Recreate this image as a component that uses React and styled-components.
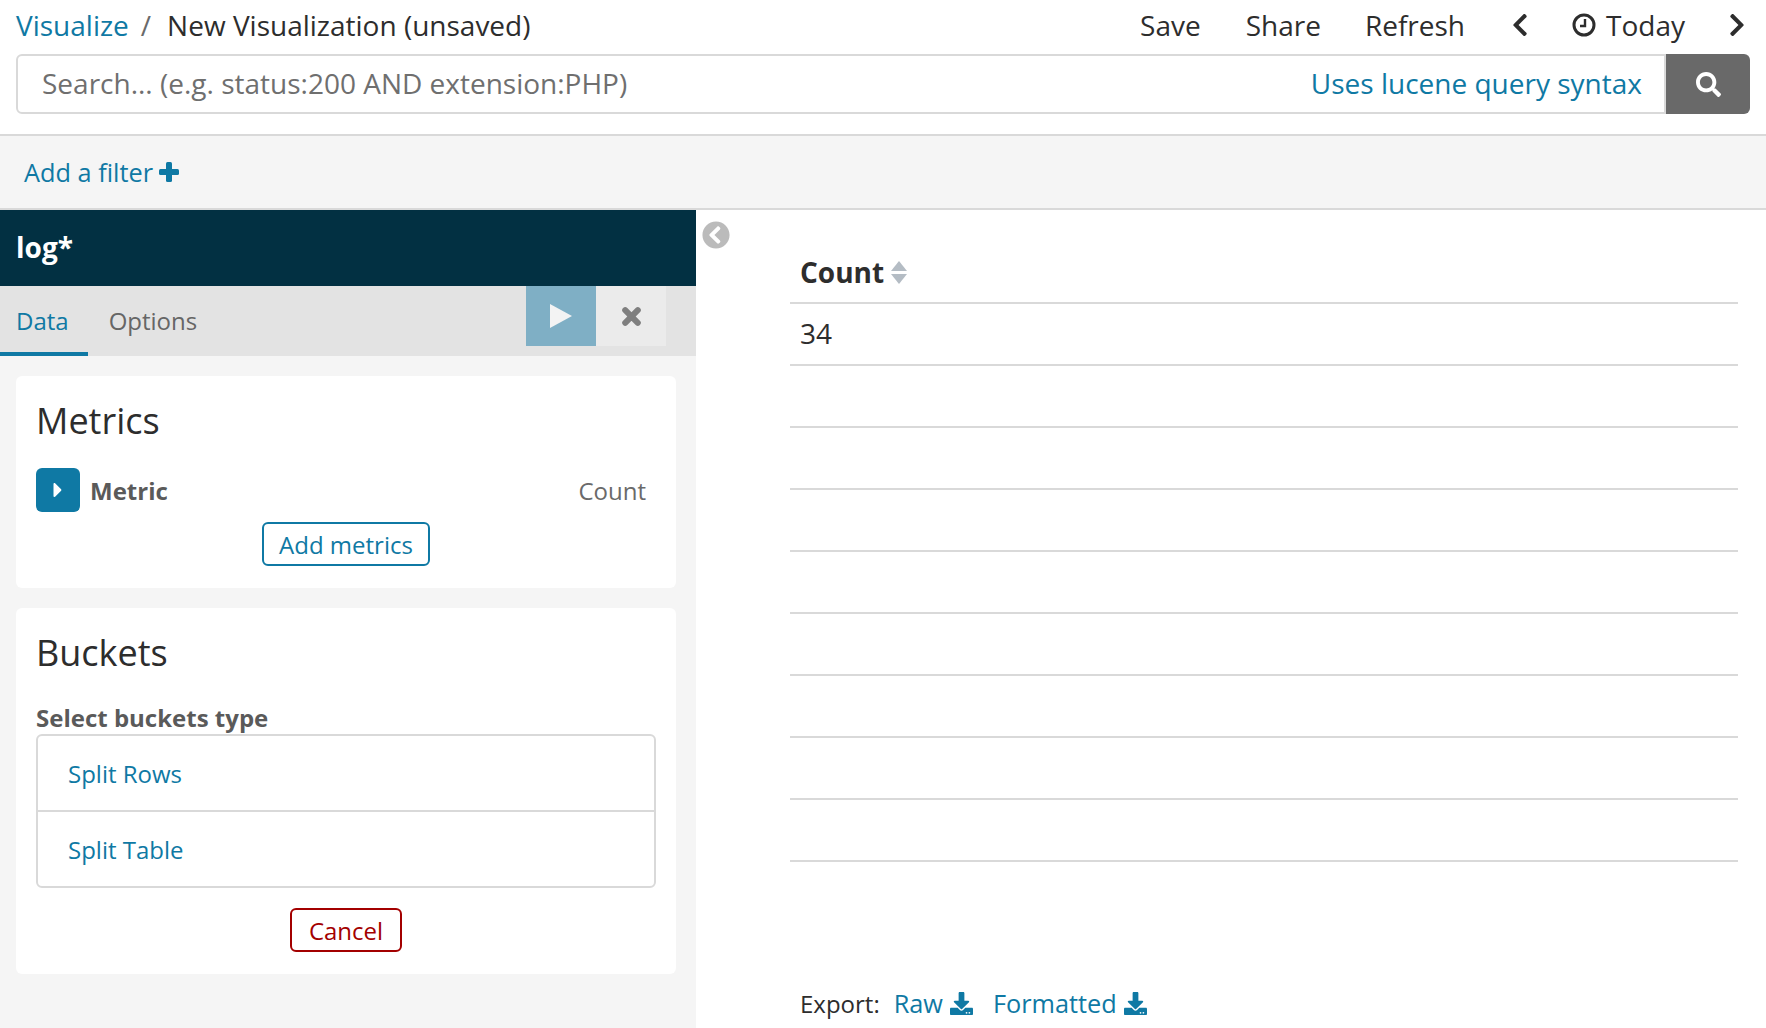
import React from "react";
import styled, { createGlobalStyle } from "styled-components";
import { FaChevronLeft, FaChevronRight, FaSearch, FaCaretRight, FaDownload, FaChevronCircleLeft } from "react-icons/fa";

const Global = createGlobalStyle`
  html, body { margin: 0; padding: 0; background: #fff; }
  body { font-family: "Open Sans", "Noto Sans", sans-serif; color: #2d2d2d; font-size: 24px; }
  * { box-sizing: border-box; }
`;

const Page = styled.div`
  height: 1028px; width: 1766px; overflow: hidden; display: flex; flex-direction: column;
`;
const Top = styled.header`
  height: 136px; border-bottom: 2px solid #d9d9d9; padding: 0 16px; flex: none;
`;
const NavRow = styled.div`
  height: 54px; padding: 0 0 4px 0; display: flex; align-items: center; justify-content: space-between; font-size: 28px;
`;
const Crumbs = styled.div`display: flex; align-items: center;`;
const Link = styled.a`color: #0f79a4; text-decoration: none;`;
const Sep = styled.span`color: #6a6a6a; margin: 0 16px 0 12px;`;
const NavMenu = styled.div`display: flex; align-items: center;`;
const NavItem = styled.span`
  margin-left: ${p => p.$gap || 45}px; display: inline-flex; align-items: center; gap: 10px; color: #2d2d2d;
  svg { display: block; }
`;
const SearchRow = styled.div`display: flex; height: 60px; width: 1734px;`;
const SearchBox = styled.div`
  flex: 1; border: 2px solid #d9d9d9; border-radius: 6px 0 0 6px;
  display: flex; align-items: center; justify-content: space-between; padding: 0 22px 2px 24px; font-size: 28px;
`;
const Placeholder = styled.span`color: #6f6f6f;`;
const SearchBtn = styled.div`
  width: 84px; background: #696969; color: #fff; border-radius: 0 6px 6px 0; display: flex; align-items: center; justify-content: center;
`;
const FilterBar = styled.div`
  height: 74px; background: #f5f5f5; border-bottom: 2px solid #d9d9d9; padding: 0 24px; display: flex; align-items: center; flex: none; font-size: 25.3px;
`;
const AddFilter = styled(Link)`display: inline-flex; align-items: center; gap: 6px;`;
const Body = styled.div`flex: 1; display: flex; min-height: 0; position: relative;`;
const Side = styled.aside`width: 696px; background: #f5f5f5; flex: none; display: flex; flex-direction: column;`;
const SideHead = styled.div`
  height: 76px; background: #023042; color: #fff; font-weight: 700; font-size: 28px; display: flex; align-items: center; padding: 0 0 2px 16px;
`;
const Tabs = styled.div`
  height: 70px; background: #e3e3e3; display: flex; align-items: flex-start; padding-right: 30px;
`;
const Tab = styled.div`
  height: 70px; padding: 3px ${p => p.$pr}px 0 ${p => p.$pl}px; display: flex; align-items: center; font-size: 24px;
  color: ${p => p.$active ? "#0f79a4" : "#666"};
  border-bottom: 4px solid ${p => p.$active ? "#0f79a4" : "transparent"};
`;
const Actions = styled.div`margin-left: auto; display: flex;`;
const ActionBtn = styled.div`
  width: 70px; height: 60px; display: flex; align-items: center; justify-content: center;
  background: ${p => p.$primary ? "#7fafc5" : "#ebebeb"};
`;
const Panels = styled.div`padding: 20px 20px 0 16px; display: flex; flex-direction: column; gap: 20px;`;
const Card = styled.section`
  background: #fff; border-radius: 6px; padding: 21px 20px 22px;
`;
const CardTitle = styled.h2`margin: 0; font-weight: 400; font-size: 36px; line-height: 48px; color: #2d2d2d;`;
const MetricRow = styled.div`display: flex; align-items: center; height: 44px; margin-top: 23px; padding-right: 10px;`;
const Toggle = styled.div`
  width: 44px; height: 44px; border-radius: 6px; background: #0f79a4; color: #fff; display: flex; align-items: center; justify-content: center; margin-right: 10px;
`;
const MetricName = styled.span`font-weight: 700; color: #5a5a5a; flex: 1;`;
const MetricValue = styled.span`color: #6a6a6a;`;
const Center = styled.div`display: flex; justify-content: center; margin-top: ${p => p.$mt}px;`;
const OutlineBtn = styled.div`
  height: 44px; width: ${p => p.$w}px; border: 2px solid ${p => p.$color}; border-radius: 6px; color: ${p => p.$color}; display: flex; align-items: center; justify-content: center;
`;
const Label = styled.div`font-weight: 700; color: #5a5a5a; line-height: 32px; margin-top: 25px;`;
const TypeList = styled.div`border: 2px solid #d9d9d9; border-radius: 6px;`;
const TypeItem = styled.div`
  height: 74px; display: flex; align-items: center; padding-left: 30px; color: #0f79a4;
  & + & { border-top: 2px solid #d9d9d9; height: 76px; }
`;
const Main = styled.main`flex: 1; display: flex; flex-direction: column; padding: 0 28px 0 94px; min-width: 0;`;
const Collapse = styled.div`position: absolute; left: 702px; top: 11px; color: #bbb; line-height: 0;`;
const HeadCell = styled.div`
  height: 94px; padding: 32px 0 0 10px; display: flex; align-items: center; font-weight: 700; font-size: 28px; gap: 7px; border-bottom: 2px solid #d9d9d9;
`;
const Row = styled.div`
  height: 62px; padding: 0 0 2px 10px; display: flex; align-items: center; font-size: 28px; border-bottom: 2px solid #d9d9d9;
`;
const Footer = styled.div`
  margin-top: auto; height: 50px; padding-left: 10px; display: flex; align-items: center;
`;
const ExportLink = styled(Link)`display: inline-flex; align-items: center; gap: 7px; font-size: 25.3px; margin-left: ${p => p.$ml}px;`;

const Clock = () => (
  <svg width="24" height="24" viewBox="0 0 24 24" fill="none" stroke="#2d2d2d">
    <circle cx="12" cy="12" r="10" strokeWidth="3" />
    <path d="M13 6v7H8" strokeWidth="2.4" />
  </svg>
);
const Play = () => (
  <svg width="22" height="24" viewBox="0 0 22 24"><polygon points="0,0 22,12 0,24" fill="#f3f3f3" /></svg>
);
const Sort = () => (
  <svg width="16" height="23" viewBox="0 0 16 23" fill="#b4bcc4">
    <polygon points="8,0 16,10 0,10" />
    <polygon points="0,13 16,13 8,23" />
  </svg>
);
const Plus = () => (
  <svg width="20" height="20" viewBox="0 0 20 20" fill="#0f79a4">
    <rect x="7" y="0" width="6" height="20" rx="1.5" />
    <rect x="0" y="7" width="20" height="6" rx="1.5" />
  </svg>
);
const Cross = () => (
  <svg width="19" height="19" viewBox="0 0 19 19" stroke="#7f7f7f" strokeWidth="6" strokeLinecap="round">
    <path d="M3.2 3.2l12.6 12.6M15.8 3.2l-12.6 12.6" />
  </svg>
);

export default function App() {
  return (
    <Page>
      <Global />
      <Top>
        <NavRow>
          <Crumbs>
            <Link>Visualize</Link>
            <Sep>/</Sep>
            <span>New Visualization (unsaved)</span>
          </Crumbs>
          <NavMenu>
            <NavItem>Save</NavItem>
            <NavItem>Share</NavItem>
            <NavItem $gap={44}>Refresh</NavItem>
            <NavItem $gap={42}><FaChevronLeft size={26} /></NavItem>
            <NavItem $gap={39}><Clock />Today</NavItem>
            <NavItem $gap={39}><FaChevronRight size={26} /></NavItem>
          </NavMenu>
        </NavRow>
        <SearchRow>
          <SearchBox>
            <Placeholder>Search... (e.g. status:200 AND extension:PHP)</Placeholder>
            <Link>Uses lucene query syntax</Link>
          </SearchBox>
          <SearchBtn><FaSearch size={25} /></SearchBtn>
        </SearchRow>
      </Top>
      <FilterBar>
        <AddFilter>Add a filter <Plus /></AddFilter>
      </FilterBar>
      <Body>
        <Side>
          <SideHead>log*</SideHead>
          <Tabs>
            <Tab $active $pl={16} $pr={19}>Data</Tab>
            <Tab $pl={21} $pr={20}>Options</Tab>
            <Actions>
              <ActionBtn $primary><Play /></ActionBtn>
              <ActionBtn><Cross /></ActionBtn>
            </Actions>
          </Tabs>
          <Panels>
            <Card>
              <CardTitle>Metrics</CardTitle>
              <MetricRow>
                <Toggle><FaCaretRight size={24} /></Toggle>
                <MetricName>Metric</MetricName>
                <MetricValue>Count</MetricValue>
              </MetricRow>
              <Center $mt={10}><OutlineBtn $color="#0f79a4" $w={168}>Add metrics</OutlineBtn></Center>
            </Card>
            <Card>
              <CardTitle>Buckets</CardTitle>
              <Label>Select buckets type</Label>
              <TypeList>
                <TypeItem>Split Rows</TypeItem>
                <TypeItem>Split Table</TypeItem>
              </TypeList>
              <Center $mt={20}><OutlineBtn $color="#a30000" $w={112}>Cancel</OutlineBtn></Center>
            </Card>
          </Panels>
        </Side>
        <Collapse><FaChevronCircleLeft size={28} /></Collapse>
        <Main>
          <HeadCell>Count <Sort /></HeadCell>
          <Row>34</Row>
          {Array.from({ length: 8 }).map((_, i) => <Row key={i} />)}
          <Footer>
            Export:
            <ExportLink $ml={14}>Raw <FaDownload size={23} /></ExportLink>
            <ExportLink $ml={20}>Formatted <FaDownload size={23} /></ExportLink>
          </Footer>
        </Main>
      </Body>
    </Page>
  );
}
